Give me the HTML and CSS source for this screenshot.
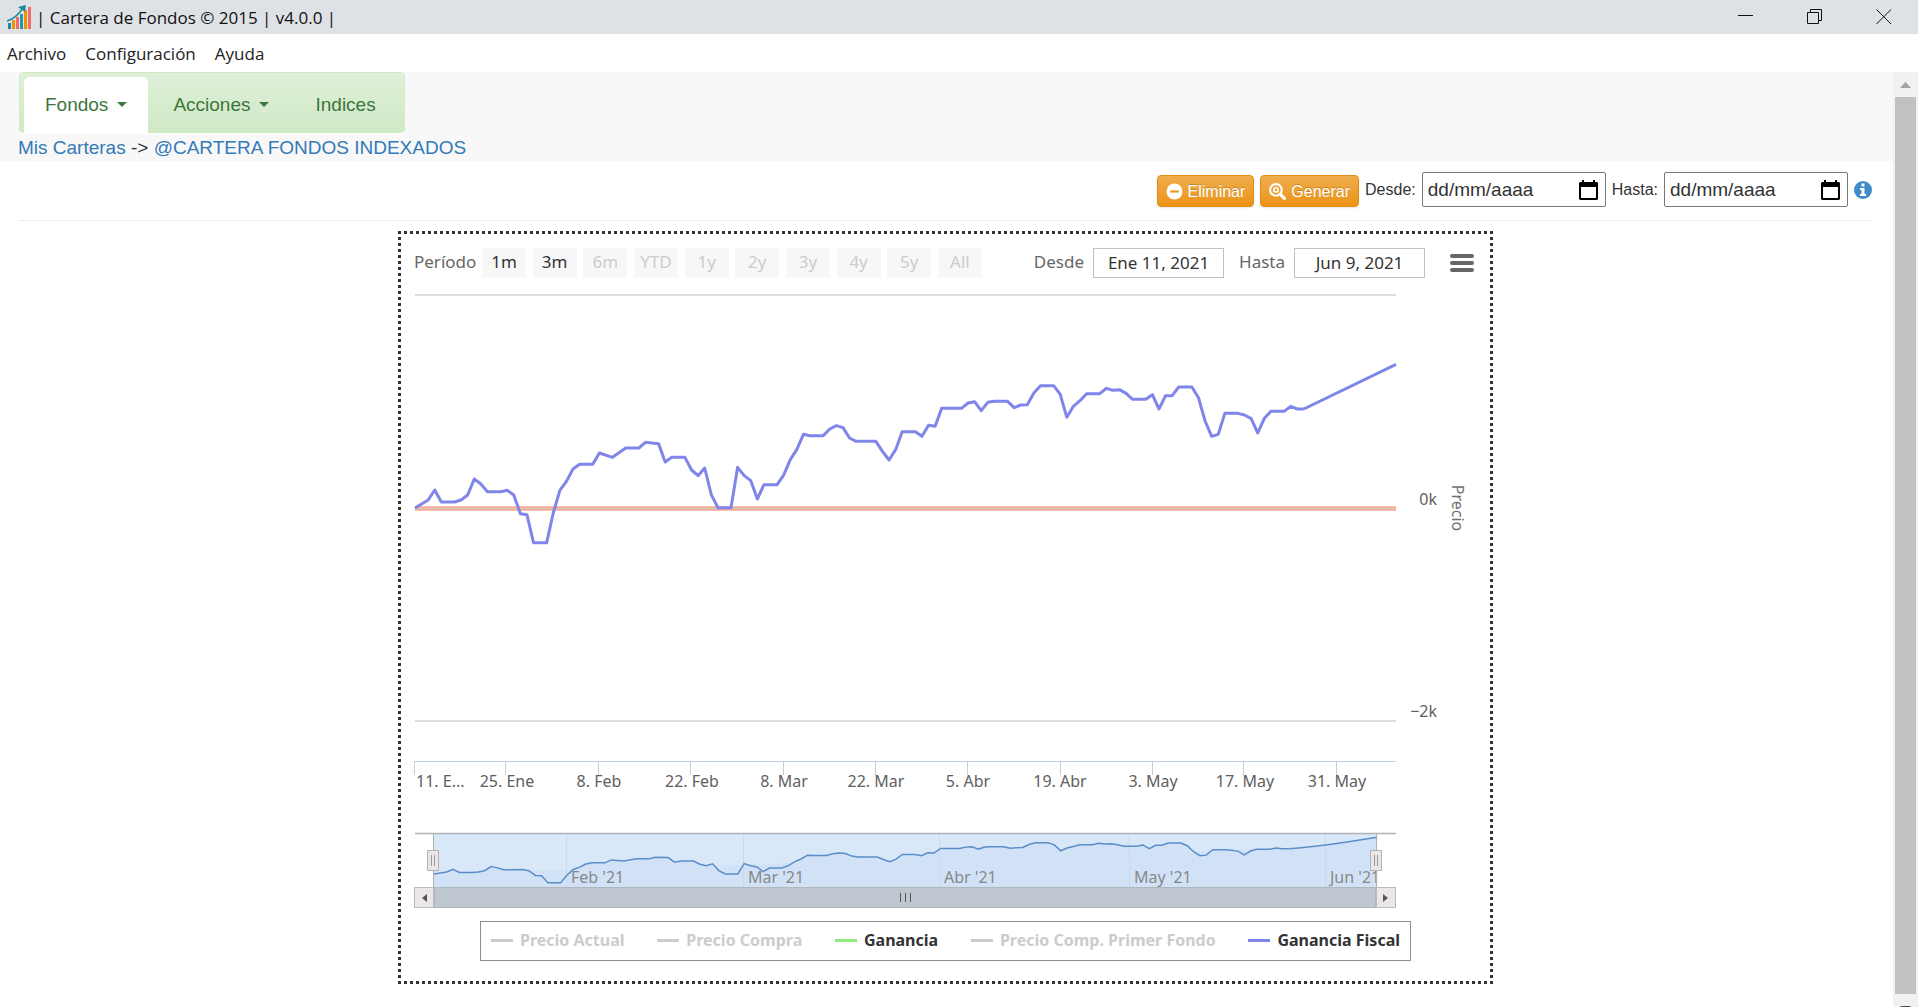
FILE: index.html
```html
<!DOCTYPE html>
<html lang="es">
<head>
<meta charset="utf-8">
<title>Cartera de Fondos</title>
<link rel="stylesheet" href="styles.css">
</head>
<body>
<header class="titlebar">
  <svg class="app-icon" width="24" height="25" viewBox="0 0 24 25" aria-hidden="true">
    <rect x="1" y="18" width="3" height="6" fill="#1b8a9e"/><rect x="5" y="15" width="3" height="9" fill="#fb8c00"/><rect x="9" y="12" width="3" height="12" fill="#ef6c6c"/><rect x="13" y="9" width="3" height="15" fill="#1b9cb0"/><rect x="17" y="5" width="3" height="19" fill="#fb8c00"/><rect x="21" y="2" width="3" height="22" fill="#ef6c6c"/>
    <path d="M0 16C7 14 12 9 16 3" fill="none" stroke="#1b8a9e" stroke-width="1.5"/><path d="M11 2l8-2-1 7z" fill="#1b8a9e"/>
  </svg>
  <h1 class="title">| Cartera de Fondos © 2015 | v4.0.0 |</h1>
  <div class="window-buttons">
    <button type="button" aria-label="Minimizar"><svg width="16" height="16" viewBox="0 0 16 16"><path d="M0 6.5h15"/></svg></button>
    <button type="button" aria-label="Restaurar"><svg width="16" height="16" viewBox="0 0 16 16"><path d="M.5 3.5h11v11H.5zM3.500 3.500V.5h11v11h-3"/></svg></button>
    <button type="button" aria-label="Cerrar"><svg width="16" height="16" viewBox="0 0 16 16"><path d="M.5 .5l14.500 14.500M15 .5L.5 15"/></svg></button>
  </div>
</header>
<nav class="menubar">
  <a href="#">Archivo</a><a href="#">Configuración</a><a href="#">Ayuda</a>
</nav>
<div class="viewport">
  <main class="page">
    <div class="page-head">
      <nav class="tabs">
        <a class="tab active" href="#">Fondos <span class="caret"></span></a>
        <a class="tab" href="#">Acciones <span class="caret"></span></a>
        <a class="tab" href="#">Indices</a>
      </nav>
      <p class="breadcrumb"><a href="#">Mis Carteras</a> -&gt; <a href="#">@CARTERA FONDOS INDEXADOS</a></p>
    </div>
    <form class="toolbar">
      <button type="button" class="btn"><svg width="17" height="17" viewBox="0 0 16 16"><circle cx="8" cy="8" r="7.500" fill="#fff"/><path d="M4 8h8" stroke="#e8941f" stroke-width="2"/></svg>Eliminar</button>
      <button type="button" class="btn"><svg width="17" height="17" viewBox="0 0 16 16" fill="none" stroke="#fff"><circle cx="6.500" cy="6.500" r="5.500" stroke-width="2"/><path d="M10.500 10.500l4 4" stroke-width="3" stroke-linecap="round"/><circle cx="6.500" cy="6.500" r="2" stroke-width="1.500"/></svg>Generar</button>
      <label for="desde">Desde:</label>
      <span class="date"><input id="desde" type="text" placeholder="dd/mm/aaaa"><button type="button" aria-label="Abrir calendario"><svg width="19" height="20" viewBox="0 0 19 20"><path d="M1 2h2V0h2v2h9V0h2v2h2l1 1v16l-1 1H1l-1-1V3zM2 7v11h15V7z" fill-rule="evenodd"/></svg></button></span>
      <label for="hasta">Hasta:</label>
      <span class="date"><input id="hasta" type="text" placeholder="dd/mm/aaaa"><button type="button" aria-label="Abrir calendario"><svg width="19" height="20" viewBox="0 0 19 20"><path d="M1 2h2V0h2v2h9V0h2v2h2l1 1v16l-1 1H1l-1-1V3zM2 7v11h15V7z" fill-rule="evenodd"/></svg></button></span>
      <svg class="info" width="18" height="18" viewBox="0 0 18 18" role="img" aria-label="Información"><circle cx="9" cy="9" r="9" fill="#428bca"/><path d="M7.500 2.500h3v3h-3zM6 7h4.500v6H12v2H6v-2h1.500V9H6z" fill="#fff"/></svg>
    </form>
    <div class="chart-area">
    <section class="chart">
      <div class="chart-head">
        <span class="range-label">Período</span>
        <div class="ranges">
          <button type="button">1m</button><button type="button">3m</button><button type="button" disabled>6m</button><button type="button" disabled>YTD</button><button type="button" disabled>1y</button><button type="button" disabled>2y</button><button type="button" disabled>3y</button><button type="button" disabled>4y</button><button type="button" disabled>5y</button><button type="button" disabled>All</button>
        </div>
        <div class="range-inputs">
          <label for="from">Desde</label><input id="from" type="text" value="Ene 11, 2021">
          <label for="to">Hasta</label><input id="to" type="text" value="Jun 9, 2021">
        </div>
        <button type="button" class="chart-menu" aria-label="Menú del gráfico"><svg width="24" height="20" viewBox="0 0 24 20"><path d="M2 3h20M2 10h20M2 17h20" stroke="#666" stroke-width="4" stroke-linecap="round"/></svg></button>
      </div>
      <svg class="plot" viewBox="0 0 1089 607">
        <defs>
          <polyline id="series" vector-effect="non-scaling-stroke" points="0,0 2,-24 3,-54 4,-18 6,-18 7,-24 8,-39 9,-87 10,-72 11,-49 13,-49 14,-53 15,-39 16,17 17,20 18,104 20,104 21,15 22,-53 23,-80 24,-117 25,-131 27,-131 28,-165 30,-152 32,-180 34,-180 35,-197 37,-193 38,-138 39,-152 41,-152 42,-114 43,-97 44,-120 45,-40 46,-1 48,-1 49,-122 50,-97 51,-82 52,-27 53,-70 55,-70 56,-99 57,-145 58,-176 59,-221 60,-217 62,-217 63,-237 64,-247 65,-241 66,-210 67,-200 70,-200 71,-170 72,-144 73,-175 74,-229 76,-229 77,-215 78,-248 79,-245 80,-299 83,-299 84,-315 85,-319 86,-292 87,-317 88,-320 90,-320 91,-301 92,-309 93,-310 94,-345 95,-367 97,-367 98,-341 99,-272 100,-305 101,-322 102,-343 104,-343 105,-359 106,-353 107,-355 108,-344 109,-326 111,-326 112,-340 113,-297 114,-337 115,-337 116,-363 118,-363 119,-331 120,-261 121,-215 122,-221 123,-284 125,-284 126,-279 127,-268 128,-225 129,-269 130,-290 132,-290 133,-305 134,-297 135,-297"/>
        </defs>
        <path class="grid" d="M14 15H995M14 441H995"/>
        <path d="M14 228.500H995" stroke="#fcc4ae" stroke-width="5"/>
        <path d="M14 228.500H995" stroke="#f2a58e" stroke-width="3"/>
        <path d="M14 228.500H995" stroke="#ddd0c0" stroke-width="1"/>
        <g class="line" transform="translate(14 228) scale(6.584 .33333)">
          <use href="#series"/>
          <path vector-effect="non-scaling-stroke" d="M135-297L149-431"/>
        </g>
        <path class="axis" d="M13 481.500H995M13.500 481v14M104.500 481v14M197.500 481v14M289.500 481v14M382.500 481v14M474.500 481v14M566.500 481v14M659.500 481v14M751.500 481v14M842.500 481v14M935.500 481v14"/>
        <g class="axis-text">
          <text x="15" y="507">11. E...</text>
          <g text-anchor="middle">
            <text x="106" y="507">25. Ene</text><text x="198" y="507">8. Feb</text><text x="291" y="507">22. Feb</text><text x="383" y="507">8. Mar</text><text x="475" y="507">22. Mar</text><text x="567" y="507">5. Abr</text><text x="659" y="507">19. Abr</text><text x="752" y="507">3. May</text><text x="844" y="507">17. May</text><text x="936" y="507">31. May</text>
          </g>
          <g text-anchor="end"><text x="1036" y="225">0k</text><text x="1036" y="437">−2k</text></g>
        </g>
        <text class="axis-title" transform="translate(1051 228) rotate(90)" text-anchor="middle">Precio</text>

        <rect x="33" y="554" width="943" height="53" fill="#d8e8f9"/>
        <g transform="translate(33 594) scale(6.330 .08533)">
          <g fill="#d1e2f7"><use href="#series"/><path d="M0 0V152H149V-431Q142-340 135-297Z"/></g>
        </g>
        <path d="M165.500 554v53M342.500 554v53M538.500 554v53M728.500 554v53M924.500 554v53" stroke="#c8d9ea"/>
        <g class="nav-text"><text x="170" y="603">Feb '21</text><text x="347" y="603">Mar '21</text><text x="543" y="603">Abr '21</text><text x="733" y="603">May '21</text><text x="929" y="603">Jun '21</text></g>
        <g class="nav-line" transform="translate(33 594) scale(6.330 .08533)">
          <use href="#series"/>
          <path vector-effect="non-scaling-stroke" d="M135-297Q139-310 149-431"/>
        </g>
        <path d="M14 553.500H995" stroke="#b2b1b6" stroke-width="1.500"/>
        <path d="M32.500 554v53M975.500 554v53" stroke="#b2b1b6"/>
        <g fill="#ebe7e8" stroke="#b2b1b6">
          <path d="M26.500 570.500h11v20h-11zM969.500 570.500h11v20h-11z"/>
          <path d="M30.500 575v11M33.500 575v11M973.500 575v11M976.500 575v11" stroke="#999"/>
        </g>
      </svg>
      <div class="scrollbar-x">
        <button type="button" aria-label="Anterior"><svg width="6" height="8"><path d="M6 0v8L1 4z" fill="#555"/></svg></button>
        <div class="thumb-x"><i></i><i></i><i></i></div>
        <button type="button" aria-label="Siguiente"><svg width="6" height="8"><path d="M0 0v8l5-4z" fill="#555"/></svg></button>
      </div>
      <div class="legend">
        <button type="button" class="off">Precio Actual</button>
        <button type="button" class="off">Precio Compra</button>
        <button type="button" class="green">Ganancia</button>
        <button type="button" class="off">Precio Comp. Primer Fondo</button>
        <button type="button" class="blue">Ganancia Fiscal</button>
      </div>
    </section>
    </div>
  </main>
  <div class="scrollbar-y" aria-hidden="true">
    <svg width="11" height="6"><path d="M0 6L5.500 0 11 6z" fill="#a3a3a3"/></svg>
    <div class="thumb-y"></div>
    <svg class="arrow-down" width="11" height="6"><path d="M0 0h11L5.500 6z" fill="#505050"/></svg>
  </div>
</div>
</body>
</html>
```
FILE: styles.css
```css
* { box-sizing: border-box; }
body {
  margin: 0;
  height: 100vh;
  display: flex;
  flex-direction: column;
  overflow: hidden;
  background: #fff;
  color: #333;
  font: 19px/27px "Liberation Sans", Arial, sans-serif;
}
button { font: inherit; color: inherit; border: 0; background: none; padding: 0; }
a { color: #337ab7; text-decoration: none; }
svg { display: block; }

.titlebar, .menubar { flex: none; display: flex; align-items: center; font-family: "Open Sans", "Noto Sans", sans-serif; color: #111; }
.titlebar { height: 34px; padding-left: 7px; gap: 5px; background: #dee1e6; }
.title { margin: 0; font-size: 17px; font-weight: 400; }
.window-buttons { display: flex; margin-left: auto; }
.window-buttons button { width: 69px; height: 32px; display: grid; place-items: center; }
.window-buttons path { fill: none; stroke: #111; }
.menubar { height: 38px; padding-left: 7px; gap: 19px; font-size: 17px; }
.menubar a { color: #222; }

.viewport { flex: 1; min-height: 0; display: flex; }
.page { flex: 1; overflow: hidden; }
.page-head { background: #f8f8f8; padding: 0 18px; height: 89px; }
.tabs {
  display: inline-flex;
  height: 62px;
  margin-left: 1px;
  padding: 4px 4px 0;
  border: 1px solid #d0e9c6;
  border-bottom-color: #fff;
  border-radius: 5px;
  background: linear-gradient(#dff0d8, #d0e9c6);
}
.tab { display: flex; align-items: center; gap: 9px; padding: 0 21px 2px 25px; color: #3c763d; }
.tab.active { background: #fff; border-radius: 5px 5px 0 0; padding-left: 21px; }
.caret { border: 5px solid transparent; border-top-color: #3c763d; border-bottom: 0; }
.tab:last-child { padding-right: 24px; }
.breadcrumb { margin: 0; line-height: 27px; }

.toolbar {
  display: flex;
  justify-content: flex-end;
  align-items: center;
  gap: 6px;
  height: 60px;
  margin: 0 21px 10px 19px;
  padding-bottom: 2px;
  border-bottom: 1px solid #eee;
  font-size: 16px;
}
.btn {
  display: flex;
  align-items: center;
  gap: 5px;
  height: 32px;
  margin-top: 2px;
  padding: 2px 8px 0;
  border: 1px solid #e38d13;
  border-radius: 4px;
  background: linear-gradient(#f0ad4e, #eb9316);
  color: #fff;
  text-shadow: 0 -1px 0 rgba(0, 0, 0, .2);
  box-shadow: 0 1px 2px rgba(0, 0, 0, .1);
}
.date { display: flex; align-items: center; width: 184px; height: 35px; padding: 0 7px 0 5px; border: 1px solid #767676; border-radius: 2px; }
.date input { flex: 1; min-width: 0; border: 0; padding: 0; outline: 0; font: 19px "Liberation Sans", Arial, sans-serif; }
.date input::placeholder { color: #333; opacity: 1; }

.chart-area { padding: 0 21px 0 19px; }
.chart {
  max-width: 1095px;
  margin: 0 auto;
  border: 3px dotted #333;
  font-family: "Noto Sans", sans-serif;
  font-size: 16px;
}
.chart-head { display: flex; align-items: center; height: 46px; padding: 12px 16px 0 13px; color: #666; font-size: 17px; line-height: 20px; }
.chart-head span, .chart-head label { padding-bottom: 2px; }
.range-label { width: 68px; }
.ranges { display: flex; justify-content: space-between; width: 500px; }
.ranges button { width: 44px; height: 30px; padding-bottom: 2px; background: #f7f7f7; color: #333; }
.ranges button:disabled { color: #ccc; }
.range-inputs { display: flex; align-items: center; gap: 9px; margin-left: auto; margin-right: 25px; }
.range-inputs input { width: 131px; height: 30px; margin-right: 6px; border: 1px solid silver; padding: 0 0 2px; text-align: center; font: inherit; color: #333; }
.range-inputs input:last-child { margin-right: 0; }
.plot { width: 100%; height: auto; font-size: 16px; }
.grid { stroke: #dcdcdc; stroke-width: 2; }
.line { fill: none; stroke: #8085e9; stroke-width: 3; stroke-linejoin: round; }
.axis { stroke: #c0d0e0; fill: none; }
.axis-text { fill: #606060; }
.axis-title { fill: #707070; }
.nav-line { fill: none; stroke: #5b8dc8; stroke-width: 1.5; }
.nav-text { fill: #888; }
.scrollbar-x { display: flex; height: 21px; margin: 0 94px 0 13px; }
.scrollbar-x button { width: 20px; border: 1px solid #bbb; background: #ebe7e8; display: grid; place-items: center; }
.thumb-x { flex: 1; display: flex; justify-content: center; align-items: center; gap: 4px; background: #bfc8d1; border: 1px solid #b0b6bd; }
.thumb-x i { width: 1px; height: 9px; background: #555; }
.legend {
  display: flex;
  justify-content: space-between;
  align-items: center;
  width: 931px;
  max-width: 100%;
  height: 40px;
  margin: 13px auto 20px;
  padding: 0 10px 2px;
  border: 1px solid #909090;
  font-weight: 700;
}
.legend button { display: flex; align-items: center; gap: 7px; color: #333; }
.legend button::before { content: ""; width: 22px; height: 3px; background: #ccc; }
.legend .off { color: #ccc; }
.legend .green::before { background: #90ed7d; }
.legend .blue::before { background: #8085e9; }

.scrollbar-y { flex: none; width: 25px; padding: 10px 2px 0; background: #f1f1f1; display: flex; flex-direction: column; align-items: center; justify-content: space-between; gap: 9px; }
.scrollbar-y svg { flex: none; }
.scrollbar-y .arrow-down { margin: 3px 0 -5px; }
.thumb-y { flex: 1; align-self: stretch; background: #c1c1c1; }
```
